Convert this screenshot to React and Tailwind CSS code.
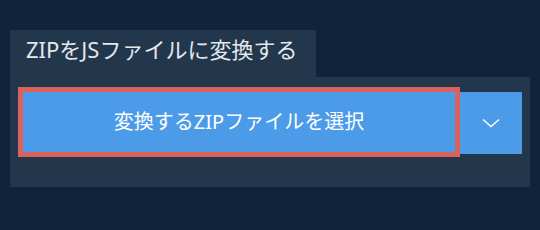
export default function App() {
  return (
    <div
      className="w-[540px] h-[230px] bg-[#10233a] pt-[30px] pl-[10px]"
      style={{ fontFamily: '"Noto Sans", "Noto Sans CJK JP", sans-serif' }}
    >
      <div className="w-[306px] h-[47px] bg-[#22364c] pl-[16px] pt-[3px] text-[22px] leading-[32px] text-[#e4e8ec]">
        ZIPをJSファイルに変換する
      </div>
      <div className="w-[520px] h-[110px] bg-[#22364c] pl-[8px] pt-[10px] flex items-start">
        <button className="w-[442px] h-[70px] border-[5px] border-[#dc605b] bg-[#4c9be8] text-white text-[20px] leading-[28px] flex items-center justify-center">
          変換するZIPファイルを選択
        </button>
        <button className="mt-[5px] w-[62px] h-[62px] bg-[#4c9be8] flex items-center justify-center">
          <svg width="18" height="10" viewBox="0 0 18 10" fill="none">
            <path d="M1 1.5 L9 8.5 L17 1.5" stroke="white" strokeWidth="1.4" />
          </svg>
        </button>
      </div>
    </div>
  );
}
